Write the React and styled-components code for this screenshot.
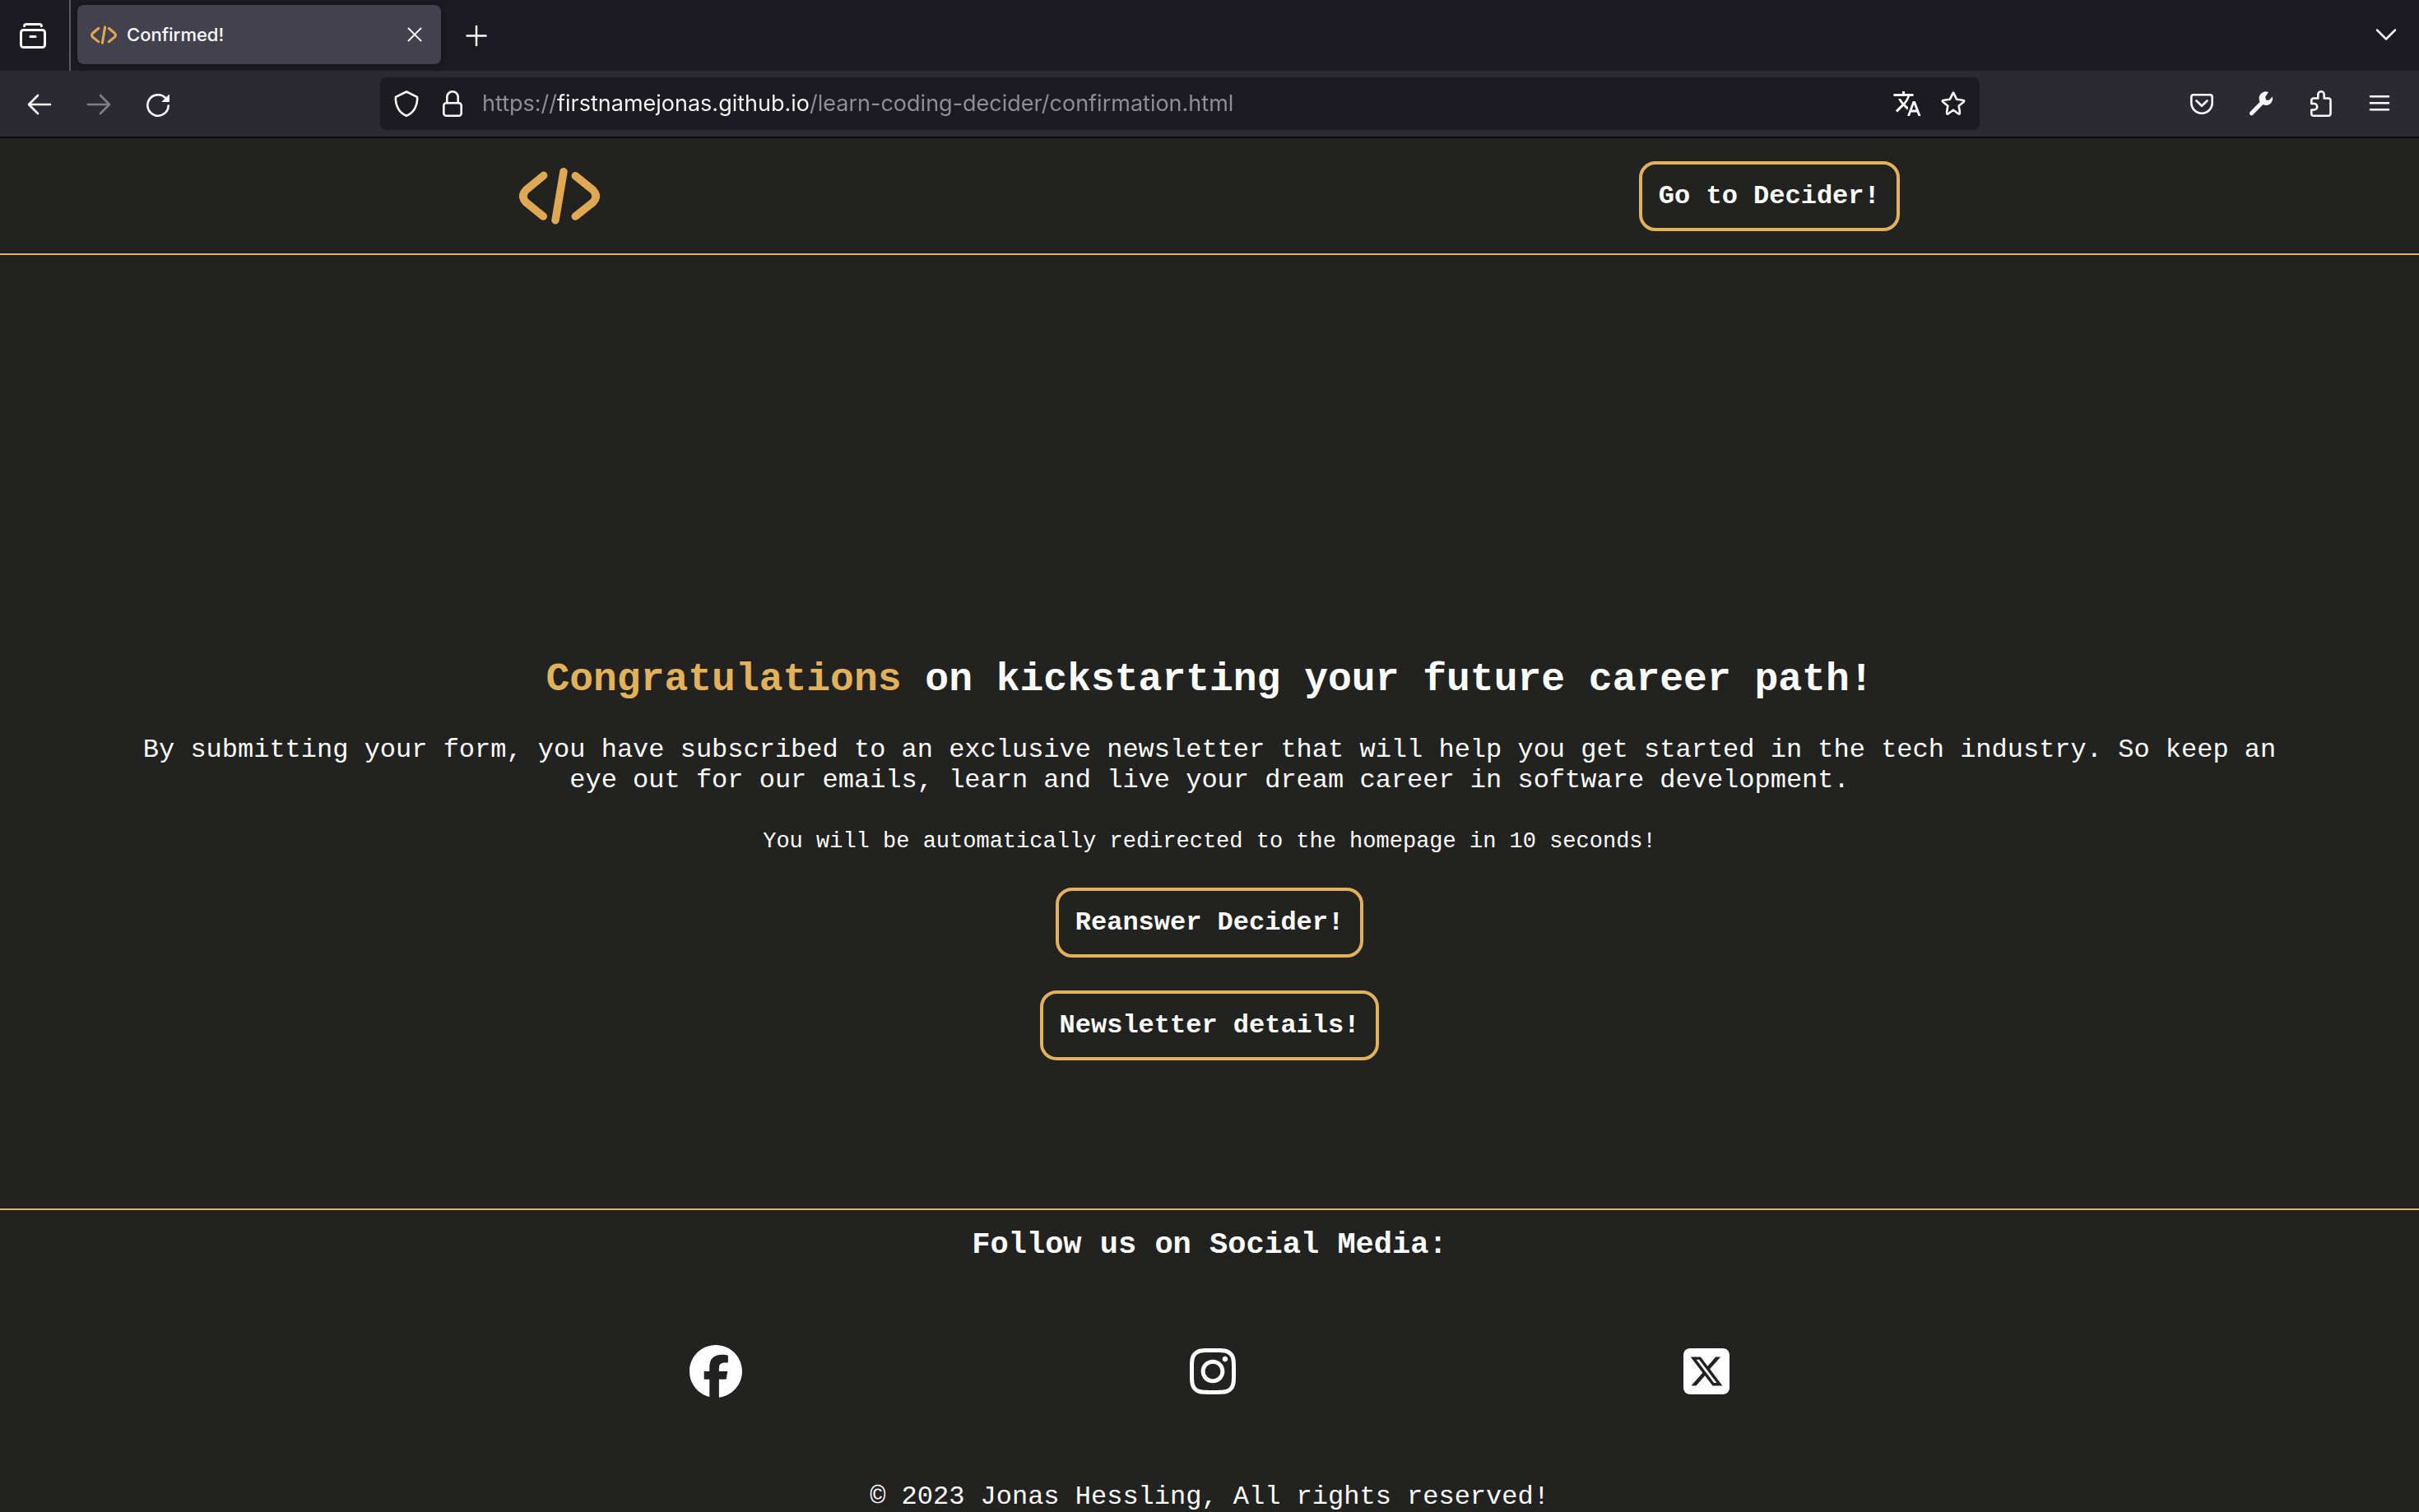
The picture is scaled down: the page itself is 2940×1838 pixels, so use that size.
import React from "react";
import styled, { createGlobalStyle } from "styled-components";
import { FaFacebook, FaInstagram, FaSquareXTwitter } from "react-icons/fa6";
import { MdTranslate } from "react-icons/md";

const gold = "#e2b15b";
const mono = '"Liberation Mono", "Courier New", monospace';
const sans = 'Inter, "Liberation Sans", sans-serif';

const GlobalStyle = createGlobalStyle`
  *, *::before, *::after { box-sizing: border-box; }
  body { margin: 0; background: #222220; }
  h1, h2, p, ul { margin: 0; padding: 0; }
`;

const Window = styled.div`
  display: flex;
  flex-direction: column;
  min-height: 100vh;
`;

/* Browser chrome */

const TabStrip = styled.div`
  display: flex;
  align-items: center;
  height: 86px;
  background: #1c1b22;
  font-family: ${sans};
`;

const IconButton = styled.button`
  display: flex;
  flex: none;
  align-items: center;
  justify-content: center;
  width: ${(p) => p.$width || 72}px;
  height: 64px;
  padding: 0;
  border: 0;
  background: none;
  color: #fbfbfe;

  &:disabled {
    color: #7f7e84;
  }
`;

const Divider = styled.span`
  align-self: stretch;
  width: 2px;
  margin: 0 8px 0 4px;
  background: #5b5a62;
`;

const Tab = styled.div`
  display: flex;
  align-items: center;
  gap: 12px;
  width: 442px;
  height: 72px;
  margin-bottom: 2px;
  padding: 0 16px;
  border-radius: 8px;
  background: #42414d;
  box-shadow: 0 0 8px rgba(0, 0, 0, 0.4);
  color: #fbfbfe;
`;

const TabTitle = styled.span`
  flex: 1;
  font-size: 22px;
  font-weight: 500;
  line-height: 28px;
`;

const Spacer = styled.span`
  flex: 1;
`;

const Toolbar = styled.div`
  display: flex;
  align-items: center;
  height: 82px;
  padding: 0 12px;
  border-bottom: 2px solid #0d0d11;
  background: #2b2a33;
  font-family: ${sans};
`;

const AddressBar = styled.form`
  display: flex;
  flex: 1;
  align-items: center;
  height: 64px;
  margin: 0 234px;
  padding: 0 8px;
  border-radius: 8px;
  background: #1c1b22;
`;

const Address = styled.input`
  flex: 1;
  min-width: 0;
  height: 40px;
  margin-left: 4px;
  padding: 0;
  border: 0;
  outline: 0;
  font-family: ${sans};
  font-size: 27px;
  line-height: 40px;
  color: transparent;
  background: linear-gradient(
    90deg,
    #8f8f95 91px,
    #fbfbfe 91px,
    #fbfbfe 397px,
    #8f8f95 397px
  );
  background-clip: text;
  -webkit-background-clip: text;
`;

const Drawing = styled.svg`
  display: block;
  flex: none;
  fill: none;
  stroke: currentColor;
  stroke-width: ${(p) => p.$stroke || 3};
  stroke-linecap: round;
  stroke-linejoin: round;
`;

/* Web page */

const Header = styled.header`
  display: flex;
  align-items: center;
  justify-content: space-around;
  height: 142px;
  border-bottom: 2px solid ${gold};
`;

const LogoLink = styled.a`
  color: #dfa853;
`;

const Favicon = styled.span`
  display: flex;
  color: #dfa853;
`;

const ActionButton = styled.button`
  padding: 20px;
  border: 4px solid ${gold};
  border-radius: 20px;
  background: none;
  color: #fff;
  font-family: ${mono};
  font-size: 32px;
  font-weight: 700;
  line-height: 37px;
`;

const Main = styled.main`
  display: flex;
  flex: 1;
  flex-direction: column;
  align-items: center;
  justify-content: flex-end;
  gap: 40px;
  padding-bottom: 180px;
  color: #fff;
  font-family: ${mono};
  text-align: center;
`;

const Title = styled.h1`
  font-size: 48px;
  line-height: 54px;
`;

const Highlight = styled.span`
  color: ${gold};
`;

const Message = styled.p`
  width: 90%;
  font-size: 32px;
  line-height: 37px;
`;

const Notice = styled.p`
  font-size: 27px;
  line-height: 32px;
`;

const Footer = styled.footer`
  display: flex;
  flex-direction: column;
  align-items: center;
  padding-top: 20px;
  border-top: 2px solid ${gold};
  color: #fff;
  font-family: ${mono};
`;

const FooterTitle = styled.h2`
  font-size: 37px;
  line-height: 44px;
`;

const SocialList = styled.ul`
  display: flex;
  justify-content: space-evenly;
  width: 80%;
  padding: 100px 0 102px;
  list-style: none;
`;

const SocialLink = styled.a`
  display: block;
  color: #fff;

  svg {
    display: block;
    width: ${(p) => p.$width}px;
    height: 64px;
  }
`;

const Copyright = styled.p`
  font-size: 32px;
  line-height: 37px;
`;

function Icon({ size = 32, stroke, children }) {
  return (
    <Drawing width={size} height={size} viewBox="0 0 32 32" $stroke={stroke} aria-hidden="true">
      {children}
    </Drawing>
  );
}

function CodeMark({ width, height, stroke = 9.5 }) {
  return (
    <Drawing width={width} height={height} viewBox="0 0 98 70" $stroke={stroke} aria-hidden="true">
      <path d="M29.7 10.3 8.3 28Q1.3 35.3 8.3 43L29.3 60" />
      <path d="M54 5.7 44 64.7" />
      <path d="M68.3 10.7 89.7 28Q96.7 35.3 89.7 43L68.3 60" />
    </Drawing>
  );
}

const socials = [
  { name: "Facebook", Glyph: FaFacebook, width: 64 },
  { name: "Instagram", Glyph: FaInstagram, width: 56 },
  { name: "X", Glyph: FaSquareXTwitter, width: 56 },
];

export default function App() {
  return (
    <Window>
      <GlobalStyle />
      <TabStrip>
        <IconButton $width={80} aria-label="Recent browsing">
          <Icon>
            <path d="M5.5 4.6C5.8 3 6.8 2.5 8 2.5h16c1.2 0 2.2.5 2.5 2.1" />
            <rect x="1.5" y="9.5" width="29" height="21" rx="3" />
            <path d="M13 17.5h6" />
          </Icon>
        </IconButton>
        <Divider />
        <Tab>
          <Favicon>
            <CodeMark width={32} height={23} />
          </Favicon>
          <TabTitle>Confirmed!</TabTitle>
          <IconButton $width={32} aria-label="Close tab">
            <Icon size={20} stroke={3}>
              <path d="M4 4 28 28M28 4 4 28" />
            </Icon>
          </IconButton>
        </Tab>
        <IconButton $width={86} aria-label="New tab">
          <Icon stroke={2.5}>
            <path d="M16 5v23M4.5 16.5h23" />
          </Icon>
        </IconButton>
        <Spacer />
        <IconButton $width={80} aria-label="List all tabs">
          <Icon stroke={2.5}>
            <path d="M5 9.5 16 20.5 27 9.5" />
          </Icon>
        </IconButton>
      </TabStrip>

      <Toolbar>
        <IconButton aria-label="Back">
          <Icon stroke={2.6}>
            <path d="M29 17H3.5M14 6 3 17 14 28" />
          </Icon>
        </IconButton>
        <IconButton aria-label="Forward" disabled>
          <Icon stroke={2.6}>
            <path d="M3 17H28.5M18 6 29 17 18 28" />
          </Icon>
        </IconButton>
        <IconButton aria-label="Reload">
          <Icon stroke={2.6}>
            <path d="M28.7 18.5A12.7 12.7 0 1 1 25 9" />
            <path d="M29.5 5.5V13.5H21.5Z" fill="currentColor" strokeWidth="1" />
          </Icon>
        </IconButton>

        <AddressBar>
          <IconButton $width={48} type="button" aria-label="Tracking protection">
            <Icon stroke={2.6}>
              <path d="M16 1.5 29 7.8C30 17 25.5 27 16 30.7 6.5 27 2 17 3 7.8Z" />
            </Icon>
          </IconButton>
          <IconButton $width={64} type="button" aria-label="Site information">
            <Icon stroke={2.6}>
              <rect x="5.3" y="15.3" width="21.4" height="15.4" rx="3" />
              <path d="M9.3 15V8a6.7 6.7 0 0 1 13.4 0v7" />
            </Icon>
          </IconButton>
          <Address
            aria-label="Address"
            defaultValue="https://firstnamejonas.github.io/learn-coding-decider/confirmation.html"
          />
          <IconButton $width={64} type="button" aria-label="Translate page">
            <MdTranslate size={36} />
          </IconButton>
          <IconButton $width={48} type="button" aria-label="Bookmark page">
            <Icon stroke={2.6}>
              <path d="M15 4.4Q16 .6 17 4.4L20.1 10.8 27.2 11.8Q31 12.1 27.8 14.6L22.7 18.7 23.9 26.2Q24.3 30 21.8 28L16 23.8 10.2 28Q7.7 30 8.1 26.2L9.3 18.7 4.2 14.6Q1 12.1 4.8 11.8L11.9 10.8Z" />
            </Icon>
          </IconButton>
        </AddressBar>

        <IconButton aria-label="Save to Pocket">
          <Icon stroke={2.6}>
            <path d="M6 5.3h20a2.7 2.7 0 0 1 2.7 2.7v7a12.7 12.7 0 0 1-25.4 0V8A2.7 2.7 0 0 1 6 5.3z" />
            <path d="M9.5 12.5 16 18.8 22.5 12.5" />
          </Icon>
        </IconButton>
        <IconButton aria-label="Developer tools">
          <Icon stroke={5}>
            <path d="M4.5 27.8 18 14" />
            <path
              d="M25 2a8.3 8.3 0 1 0 4.9 5.500L25.5 12l-3.5-.6-.8-3.6z"
              fill="currentColor"
              stroke="none"
            />
          </Icon>
        </IconButton>
        <IconButton aria-label="Extensions">
          <Icon stroke={2.6}>
            <path d="M5.3 16V12a2.5 2.5 0 0 1 2.5-2.5H13.3V5a3.7 3.7 0 0 1 7.4 0V9.5H26a2.5 2.5 0 0 1 2.5 2.5V28.2a2.5 2.5 0 0 1-2.5 2.5H7.8a2.5 2.5 0 0 1-2.5-2.5V23.5H8.5a3.75 3.75 0 0 0 0-7.5Z" />
          </Icon>
        </IconButton>
        <IconButton aria-label="Menu">
          <Icon stroke={2.6}>
            <path d="M5 7.3H27M5 15.3H27M5 23.3H27" />
          </Icon>
        </IconButton>
      </Toolbar>

      <Header>
        <LogoLink href="#home" aria-label="Home">
          <CodeMark width={98} height={70} />
        </LogoLink>
        <ActionButton>Go to Decider!</ActionButton>
      </Header>

      <Main>
        <Title>
          <Highlight>Congratulations</Highlight> on kickstarting your future career path!
        </Title>
        <Message>
          By submitting your form, you have subscribed to an exclusive newsletter that will help
          you get started in the tech industry. So keep an eye out for our emails, learn and live
          your dream career in software development.
        </Message>
        <Notice>You will be automatically redirected to the homepage in 10 seconds!</Notice>
        <ActionButton>Reanswer Decider!</ActionButton>
        <ActionButton>Newsletter details!</ActionButton>
      </Main>

      <Footer>
        <FooterTitle>Follow us on Social Media:</FooterTitle>
        <SocialList>
          {socials.map(({ name, Glyph, width }) => (
            <li key={name}>
              <SocialLink href={`#${name.toLowerCase()}`} aria-label={name} $width={width}>
                <Glyph />
              </SocialLink>
            </li>
          ))}
        </SocialList>
        <Copyright>© 2023 Jonas Hessling, All rights reserved!</Copyright>
      </Footer>
    </Window>
  );
}
